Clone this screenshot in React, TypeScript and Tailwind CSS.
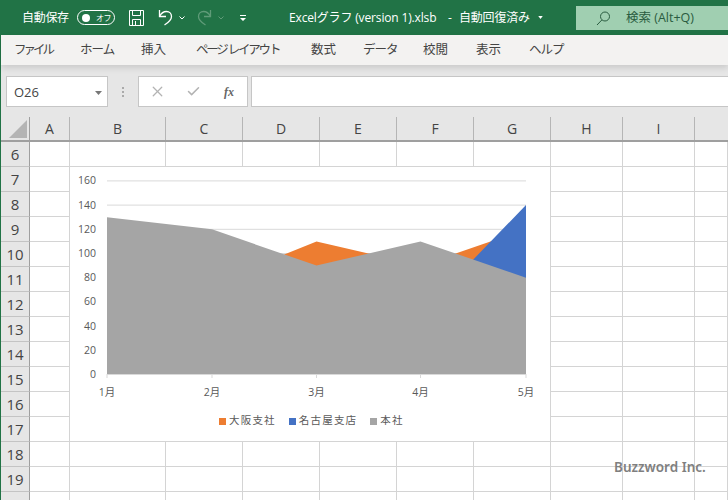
import React from 'react';
import { Check, X } from 'lucide-react';

const columns = ['A', 'B', 'C', 'D', 'E', 'F', 'G', 'H', 'I', ''];
const rows = [6, 7, 8, 9, 10, 11, 12, 13, 14, 15, 16, 17, 18, 19, 20];

const tabs = [
  { label: 'ファイル', className: 'w-[38px] ml-[13px] tracking-[-3px]' },
  { label: 'ホーム', className: 'w-[34px] ml-[28px] tracking-[-1px]' },
  { label: '挿入', className: 'w-[26px] ml-[27px]' },
  { label: 'ページ レイアウト', className: 'w-[87px] ml-[29px] tracking-[-2.2px]' },
  { label: '数式', className: 'w-[26px] ml-[28px]' },
  { label: 'データ', className: 'w-[34px] ml-[26px] tracking-[-1px]' },
  { label: '校閲', className: 'w-[26px] ml-[26px]' },
  { label: '表示', className: 'w-[26px] ml-[27px]' },
  { label: 'ヘルプ', className: 'w-[33px] ml-[27px] tracking-[-1px]' },
];

// chart coordinates are relative to the chart's own box
const xs = [37, 142, 246.5, 350.5, 456];
const yOf = (v: number) => 207.5 - v * 1.21;

function area(values: number[]) {
  const line = values.map((v, i) => `${xs[i]},${yOf(v)}`).join(' ');
  return `${xs[0]},${yOf(0)} ${line} ${xs[4]},${yOf(0)}`;
}

function SaveIcon() {
  return (
    <svg className="w-[17px] h-[18px]" viewBox="0 0 17 18" fill="none" stroke="#fff" strokeWidth="1">
      <path d="M1.5 1.5h14v15h-14z" />
      <path d="M4.5 1.5v5h8v-5M4.5 16.5v-6h8v6M7.5 12v4.5" />
    </svg>
  );
}

function UndoIcon({ color, flip }: { color: string; flip?: boolean }) {
  return (
    <svg
      className={`w-[15px] h-[17px] ${flip ? '-scale-x-100' : ''}`}
      viewBox="0 0 15 17"
      fill="none"
      stroke={color}
      strokeWidth="1.3"
    >
      <path d="M1.5 1v6.5H8" />
      <path d="M1.5 7.5C3 4.5 5.5 2.5 8.5 2.5c3 0 5 2.3 5 5 0 3.5-3 6-7 8.5" />
    </svg>
  );
}

function Chevron({ color }: { color: string }) {
  return (
    <svg className="ml-[6px] w-[6px] h-[4px]" viewBox="0 0 6 4" fill="none" stroke={color} strokeWidth="1">
      <path d="M.5.5 3 3 5.5.5" />
    </svg>
  );
}

function Chart() {
  return (
    <div className="absolute left-[69px] top-[25px] w-[480px] h-[274px] bg-white">
      <svg className="block w-[480px] h-[240px]" viewBox="0 0 480 240">
        {[160, 140, 120, 100, 80, 60, 40, 20].map((v) => (
          <line key={v} x1="37" x2="456" y1={yOf(v)} y2={yOf(v)} stroke="#d9d9d9" />
        ))}
        <polygon points={area([70, 75, 110, 90, 120])} fill="#ed7d31" />
        <polygon points={area([20, 25, 30, 50, 140])} fill="#4472c4" />
        <polygon points={area([130, 120, 90, 110, 80])} fill="#a5a5a5" />
        <line x1="37" x2="456" y1="207.5" y2="207.5" stroke="#d9d9d9" />
        {xs.map((x) => (
          <line key={x} x1={x} x2={x} y1="207" y2="211" stroke="#d9d9d9" />
        ))}
        {[160, 140, 120, 100, 80, 60, 40, 20, 0].map((v) => (
          <text key={v} x="26" y={yOf(v) + 3.5} textAnchor="end" fontSize="10.5" fill="#595959">
            {v}
          </text>
        ))}
        {['1月', '2月', '3月', '4月', '5月'].map((m, i) => (
          <text key={m} x={xs[i]} y="229" textAnchor="middle" fontSize="10.5" fill="#595959">
            {m}
          </text>
        ))}
      </svg>
      <div className="flex items-center h-[28px] pl-[149px] text-[10.5px] tracking-[1.2px] text-[#595959]">
        <span className="w-[7px] h-[7px] bg-[#ed7d31] mr-[3px]" />
        <span className="mr-[13px]">大阪支社</span>
        <span className="w-[7px] h-[7px] bg-[#4472c4] mr-[3px]" />
        <span className="mr-[13px]">名古屋支店</span>
        <span className="w-[7px] h-[7px] bg-[#a5a5a5] mr-[3px]" />
        <span>本社</span>
      </div>
    </div>
  );
}

export default function App() {
  return (
    <div className="relative w-[728px] h-[500px] overflow-hidden bg-white font-['Open_Sans','Noto_Sans_CJK_JP',sans-serif]">
      {/* タイトルバー */}
      <div className="flex items-center h-[35px] bg-[#217346] text-white text-[12px]">
        <span className="ml-[22px] w-[50px] tracking-[-0.3px] whitespace-nowrap">自動保存</span>
        <div className="flex items-center ml-[5px] w-[38px] h-[15px] rounded-full border border-white pl-[4px]">
          <span className="w-[8px] h-[8px] rounded-full bg-white shrink-0" />
          <span className="ml-[6px] text-[8px] leading-none tracking-[-0.5px] whitespace-nowrap">オフ</span>
        </div>
        <div className="ml-[13px]">
          <SaveIcon />
        </div>
        <div className="ml-[13px]">
          <UndoIcon color="#fff" />
        </div>
        <Chevron color="#fff" />
        <div className="ml-[12px]">
          <UndoIcon color="#5f9b78" flip />
        </div>
        <Chevron color="#5f9b78" />
        <svg className="ml-[15px] w-[8px] h-[8px]" viewBox="0 0 8 8" fill="#fff">
          <path d="M1 1h6v1H1zM1 4h6L4 7z" />
        </svg>
        <span className="ml-[42px] w-[150px] whitespace-nowrap tracking-[-0.15px]">Excelグラフ (version 1).xlsb</span>
        <span className="ml-[9px] w-[4px]">-</span>
        <span className="ml-[7px] w-[72px] tracking-[-0.2px] whitespace-nowrap">自動回復済み</span>
        <svg className="ml-[7px] w-[5px] h-[3px]" viewBox="0 0 6 4" fill="#fff">
          <path d="M0 0h6L3 4z" />
        </svg>
        <div className="flex items-center ml-[33px] self-start mt-[6px] w-[152px] h-[24px] bg-[#a0cfb1] text-[#2a5c40]">
          <svg className="ml-[20px] w-[15px] h-[15px]" viewBox="0 0 15 15" fill="none" stroke="#2a5c40" strokeWidth="1">
            <circle cx="9" cy="5.5" r="4.5" />
            <path d="M5.8 9 1 14" />
          </svg>
          <span className="ml-[15px] text-[12.5px] whitespace-nowrap">検索 (Alt+Q)</span>
        </div>
      </div>

      <div className="border-l border-[#217346]">
        {/* リボンのタブ */}
        <div className="relative z-10 flex items-center h-[30px] pt-[1px] bg-[#f3f2f1] text-[12.5px] text-[#444] shadow-[0_3px_6px_rgba(0,0,0,0.12)]">
          {tabs.map((tab) => (
            <span key={tab.label} className={`whitespace-nowrap ${tab.className}`}>
              {tab.label}
            </span>
          ))}
        </div>

        {/* 数式バー */}
        <div className="flex h-[52px] pt-[11px] bg-[#e6e6e6]">
          <div className="flex items-center justify-between ml-[5px] w-[102px] h-[31px] bg-white border border-[#c6c6c6] pl-[7px] pr-[5px] pt-[2px] text-[13px] text-[#444]">
            <span>O26</span>
            <svg className="w-[7px] h-[4px]" viewBox="0 0 7 4" fill="#777">
              <path d="M0 0h7L3.5 4z" />
            </svg>
          </div>
          <div className="flex flex-col justify-center gap-[2px] ml-[14px] w-[2px] h-[31px]">
            <span className="w-[2px] h-[2px] bg-[#aaa]" />
            <span className="w-[2px] h-[2px] bg-[#aaa]" />
            <span className="w-[2px] h-[2px] bg-[#aaa]" />
          </div>
          <div className="flex items-center ml-[14px] w-[110px] h-[31px] bg-white border border-[#c6c6c6]">
            <X className="ml-[10px] w-[17px] h-[17px] text-[#b3b3b3]" strokeWidth={1.8} />
            <Check className="ml-[20px] w-[15px] h-[15px] text-[#b3b3b3]" strokeWidth={2.4} />
            <span className="ml-[23px] font-['Liberation_Serif',serif] italic font-bold text-[12px] text-[#666]">fx</span>
          </div>
          <div className="ml-[3px] flex-1 h-[31px] bg-white border-y border-l border-[#c6c6c6]" />
        </div>

        {/* 列見出し */}
        <div className="flex h-[25px] bg-[#e6e6e6] border-b-2 border-[#9f9f9f] text-[14px] text-[#444]">
          <div className="flex items-end w-[29px] border-r border-[#9f9f9f] pl-[8px] pb-[2px]">
            <svg className="w-[18px] h-[18px]" viewBox="0 0 18 18" fill="#b4b4b4">
              <path d="M18 0v18H0z" />
            </svg>
          </div>
          {columns.map((c, i) => (
            <div
              key={i}
              className={`flex items-center justify-center border-r border-[#b5b5b5] ${
                ['w-[40px]', 'w-[96px]', 'w-[77px]', 'w-[77px]', 'w-[77px]', 'w-[77px]', 'w-[77px]', 'w-[72px]', 'w-[72px]', 'flex-1 border-r-0'][i]
              }`}
            >
              {c}
            </div>
          ))}
        </div>

        {/* シート */}
        <div className="relative">
          {rows.map((r) => (
            <div key={r} className="flex h-[25px]">
              <div className="flex items-center justify-center w-[29px] bg-[#e6e6e6] border-r border-b border-r-[#9f9f9f] border-b-[#c4c4c4] text-[15px] text-[#444]">
                {r}
              </div>
              {[40, 96, 77, 77, 77, 77, 77, 72, 72, 33].map((w, i) => (
                <div key={i} className="border-r border-b border-[#d4d4d4]" style={{ width: w }} />
              ))}
            </div>
          ))}
          <Chart />
        </div>
      </div>

      <span className="absolute left-[614px] top-[457px] text-[13.5px] font-semibold text-[#7f7f7f] font-['Noto_Sans',sans-serif]">
        Buzzword Inc.
      </span>
    </div>
  );
}
